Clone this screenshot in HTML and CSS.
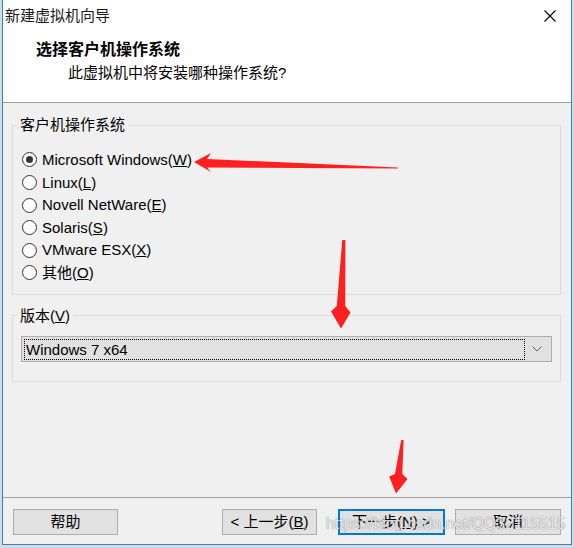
FILE: index.html
```html
<!DOCTYPE html>
<html lang="zh-CN">
<head>
<meta charset="utf-8">
<title>新建虚拟机向导</title>
<link rel="stylesheet" href="styles.css">
</head>
<body>
<div class="window">
  <div class="titlebar">
    <span class="title">新建虚拟机向导</span>
    <svg class="close" width="12" height="12" viewBox="0 0 12 12"><path d="M0.5 0.5 L11.5 11.5 M11.5 0.5 L0.5 11.5" stroke="#000" stroke-width="1.1" fill="none"/></svg>
  </div>
  <div class="header">
    <div class="h-title">选择客户机操作系统</div>
    <div class="h-sub">此虚拟机中将安装哪种操作系统?</div>
  </div>
  <div class="content">
    <fieldset class="group group-os">
      <legend>客户机操作系统</legend>
      <div class="radios">
        <div class="radio-row"><span class="radio checked"></span><span>Microsoft Windows(<u>W</u>)</span></div>
        <div class="radio-row"><span class="radio"></span><span>Linux(<u>L</u>)</span></div>
        <div class="radio-row"><span class="radio"></span><span>Novell NetWare(<u>E</u>)</span></div>
        <div class="radio-row"><span class="radio"></span><span>Solaris(<u>S</u>)</span></div>
        <div class="radio-row"><span class="radio"></span><span>VMware ESX(<u>X</u>)</span></div>
        <div class="radio-row"><span class="radio"></span><span>其他(<u>O</u>)</span></div>
      </div>
    </fieldset>
    <fieldset class="group group-ver">
      <legend>版本(<u>V</u>)</legend>
      <div class="select">
        <div class="select-focus">Windows 7 x64</div>
        <div class="select-arrow"><svg width="10" height="6" viewBox="0 0 10 6"><path d="M0.5 0.5 L5 5 L9.5 0.5" stroke="#606060" stroke-width="1" fill="none"/></svg></div>
      </div>
    </fieldset>
  </div>
  <div class="footer">
    <div class="btn btn-help">帮助</div>
    <div class="btn btn-back">&lt; 上一步(<u>B</u>)</div>
    <div class="btn btn-next">下一步(<u>N</u>) &gt;</div>
    <div class="btn btn-cancel">取消</div>
  </div>
</div>
<div class="watermark">https://blog.csdn.net/QQ32115515</div>
<svg class="arrows" width="574" height="548" viewBox="0 0 574 548">
  <polygon fill="#ff1f1f" points="194,162 211,153 207,159 398,167.5 398,168.5 207,167.5 211,172"/>
  <polygon fill="#ff1f1f" points="342.3,240 345.4,240 345.2,306 350.5,312.5 341,328.5 331,311.5 336.8,306"/>
  <polygon fill="#ff1f1f" points="401.2,440 403.6,440 402.3,474 407.5,479 396,493.5 389.2,476.5 395,474"/>
</svg>
</body>
</html>
```

FILE: styles.css
```css
html, body {
  margin: 0;
  padding: 0;
}

body {
  width: 574px;
  height: 548px;
  background: #d6d9de;
  font-family: "Liberation Sans", "Noto Sans CJK SC", sans-serif;
  font-size: 15px;
  color: #000;
  position: relative;
  overflow: hidden;
}

.window {
  margin-left: 2px;
  width: 570px;
  height: 545px;
  box-sizing: border-box;
  border-left: 1px solid #2b84d6;
  border-right: 1px solid #2b84d6;
  border-bottom: 1px solid #2b84d6;
  background: #f0f0f0;
  display: flex;
  flex-direction: column;
}

.titlebar {
  height: 30px;
  flex: none;
  background: #fff;
  display: flex;
  align-items: center;
  justify-content: space-between;
  padding: 1px 15px 0 2px;
  box-sizing: border-box;
}

.title {
  line-height: 20px;
  color: #1a1a1a;
}

.close {
  display: block;
}

.header {
  height: 62px;
  flex: none;
  background: #fff;
  border-bottom: 1px solid #a0a0a0;
  padding: 10px 0 0 33px;
  box-sizing: content-box;
}

.h-title {
  font-weight: bold;
  font-size: 16px;
  line-height: 20px;
}

.h-sub {
  margin-top: 3px;
  padding-left: 32px;
  line-height: 20px;
}

.content {
  flex: 1;
  padding: 13px 10px 0 9px;
  display: flex;
  flex-direction: column;
}

.group {
  margin: 0;
  border: 1px solid #dcdcdc;
  padding: 0 8px 10px 4px;
  min-width: 0;
}

.group legend {
  padding: 0 3px;
  line-height: 18px;
  height: 18px;
}

.radios {
  margin: 14.7px 0 0 5px;
}

.radio-row {
  height: 22.6px;
  display: flex;
  align-items: center;
  gap: 5px;
  line-height: 18px;
}

.radio {
  width: 15px;
  height: 15px;
  box-sizing: border-box;
  border: 1px solid #333;
  border-radius: 50%;
  background: #fff;
  display: flex;
  align-items: center;
  justify-content: center;
  flex: none;
}

.radio.checked::after {
  content: "";
  width: 7px;
  height: 7px;
  border-radius: 50%;
  background: #333;
}

.group-ver {
  margin-top: 11.5px;
  padding-bottom: 19px;
}

.select {
  margin: 11.5px 0 0 4px;
  height: 26px;
  box-sizing: border-box;
  border: 1px solid #adadad;
  background: #e1e1e1;
  display: flex;
  align-items: center;
  padding: 2px;
}

.select-focus {
  flex: 1;
  height: 21px;
  box-sizing: border-box;
  border: 1px dotted #000;
  line-height: 19px;
  padding-left: 1px;
}

.select-arrow {
  width: 24px;
  display: flex;
  align-items: center;
  justify-content: center;
}

.select-arrow svg {
  display: block;
}

.footer {
  flex: none;
  height: 35px;
  border-top: 1px solid #a0a0a0;
  padding: 11px 10px 0 10px;
  box-sizing: content-box;
  display: flex;
  align-items: flex-start;
}

.btn {
  height: 26px;
  box-sizing: border-box;
  border: 1px solid #adadad;
  background: #e1e1e1;
  display: flex;
  align-items: center;
  justify-content: center;
  line-height: 18px;
}

.btn-help {
  width: 105px;
}

.btn-back {
  width: 95px;
  margin-left: auto;
}

.btn-next {
  width: 107px;
  margin-left: 21px;
  border: 2px solid #0078d7;
}

.btn-cancel {
  width: 106px;
  margin-left: 10px;
}

.watermark {
  position: absolute;
  left: 326px;
  top: 513px;
  font-family: "Liberation Sans", sans-serif;
  font-size: 15.8px;
  line-height: 22px;
  color: rgba(250, 250, 250, 0.85);
  text-shadow: 0 0 1px rgba(90, 90, 90, 0.6), 0 0 1px rgba(90, 90, 90, 0.4);
  pointer-events: none;
}

.arrows {
  position: absolute;
  left: 0;
  top: 0;
  pointer-events: none;
}
```
